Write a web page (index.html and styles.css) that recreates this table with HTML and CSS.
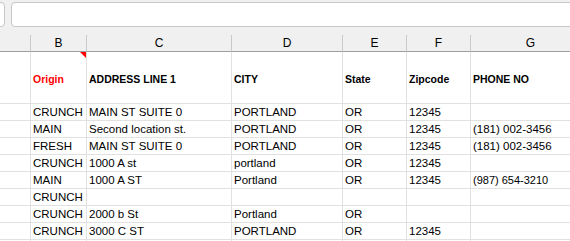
FILE: index.html
```html
<!DOCTYPE html>
<html>
<head>
<meta charset="utf-8">
<link rel="stylesheet" href="styles.css">
</head>
<body>
<div class="fbar">
  <div class="namebox"></div>
  <div class="formula"></div>
</div>
<div class="sheet">
  <div class="colhdr"></div>
  <div class="colhdr">B</div>
  <div class="colhdr">C</div>
  <div class="colhdr">D</div>
  <div class="colhdr">E</div>
  <div class="colhdr">F</div>
  <div class="colhdr">G</div>

  <div class="cell tall"></div>
  <div class="cell tall head red note">Origin<span class="tri"></span></div>
  <div class="cell tall head">ADDRESS LINE 1</div>
  <div class="cell tall head">CITY</div>
  <div class="cell tall head">State</div>
  <div class="cell tall head">Zipcode</div>
  <div class="cell tall head">PHONE NO</div>

  <div class="cell"></div><div class="cell">CRUNCH</div><div class="cell">MAIN ST SUITE 0</div><div class="cell">PORTLAND</div><div class="cell">OR</div><div class="cell">12345</div><div class="cell"></div>
  <div class="cell"></div><div class="cell">MAIN</div><div class="cell">Second location st.</div><div class="cell">PORTLAND</div><div class="cell">OR</div><div class="cell">12345</div><div class="cell">(181) 002-3456</div>
  <div class="cell"></div><div class="cell">FRESH</div><div class="cell">MAIN ST SUITE 0</div><div class="cell">PORTLAND</div><div class="cell">OR</div><div class="cell">12345</div><div class="cell">(181) 002-3456</div>
  <div class="cell"></div><div class="cell">CRUNCH</div><div class="cell">1000 A st</div><div class="cell">portland</div><div class="cell">OR</div><div class="cell">12345</div><div class="cell"></div>
  <div class="cell"></div><div class="cell">MAIN</div><div class="cell">1000 A ST</div><div class="cell">Portland</div><div class="cell">OR</div><div class="cell">12345</div><div class="cell small">(987) 654-3210</div>
  <div class="cell"></div><div class="cell">CRUNCH</div><div class="cell"></div><div class="cell"></div><div class="cell"></div><div class="cell"></div><div class="cell"></div>
  <div class="cell"></div><div class="cell">CRUNCH</div><div class="cell">2000 b St</div><div class="cell">Portland</div><div class="cell">OR</div><div class="cell"></div><div class="cell"></div>
  <div class="cell"></div><div class="cell">CRUNCH</div><div class="cell">3000 C ST</div><div class="cell">PORTLAND</div><div class="cell">OR</div><div class="cell">12345</div><div class="cell"></div>
  <div class="cell"></div><div class="cell"></div><div class="cell"></div><div class="cell"></div><div class="cell"></div><div class="cell"></div><div class="cell"></div>
</div>
</body>
</html>
```
FILE: styles.css
```css
html, body {
  margin: 0;
  padding: 0;
  background: #ffffff;
  overflow: hidden;
  width: 570px;
  height: 241px;
}
body {
  font-family: "Liberation Sans", Arial, sans-serif;
  color: #000;
}
.fbar {
  height: 35px;
  background: #f0f0f0;
  display: flex;
  align-items: flex-start;
  gap: 6px;
  padding-top: 2px;
  box-sizing: border-box;
  margin-left: -8px;
}
.namebox {
  width: 13px;
  height: 25px;
  box-sizing: border-box;
  background: #fff;
  border: 1px solid #c8c8c8;
  border-radius: 4px;
  flex: none;
}
.formula {
  width: 580px;
  height: 25px;
  box-sizing: border-box;
  background: #fff;
  border: 1px solid #c8c8c8;
  border-radius: 4px;
  flex: none;
}
.sheet {
  display: grid;
  grid-template-columns: 31px 56px 145px 111px 64px 64px 120px;
  grid-template-rows: 17px 52px;
  grid-auto-rows: 17px;
}
.colhdr {
  background: #f0f0f0;
  height: 17px;
  box-sizing: border-box;
  border-right: 1px solid #c9c9c9;
  border-bottom: 1px solid #9e9e9e;
  font-size: 12px;
  line-height: 16px;
  text-align: center;
  color: #000;
}
.cell {
  box-sizing: border-box;
  border-right: 1px solid #e1e1e1;
  border-bottom: 1px solid #e1e1e1;
  font-size: 11.5px;
  line-height: 16px;
  padding-left: 2px;
  white-space: nowrap;
  overflow: hidden;
}
.cell.tall {
  height: 52px;
  display: flex;
  align-items: center;
  padding-top: 2px;
}
.head {
  font-weight: bold;
  font-size: 10.5px;
}
.red { color: #ff0000; }
.note { position: relative; overflow: visible; }
.tri {
  position: absolute;
  top: 0;
  right: 0;
  width: 0;
  height: 0;
  border-top: 6px solid #ff0000;
  border-left: 6px solid transparent;
}
.small { font-size: 11px; }
```
